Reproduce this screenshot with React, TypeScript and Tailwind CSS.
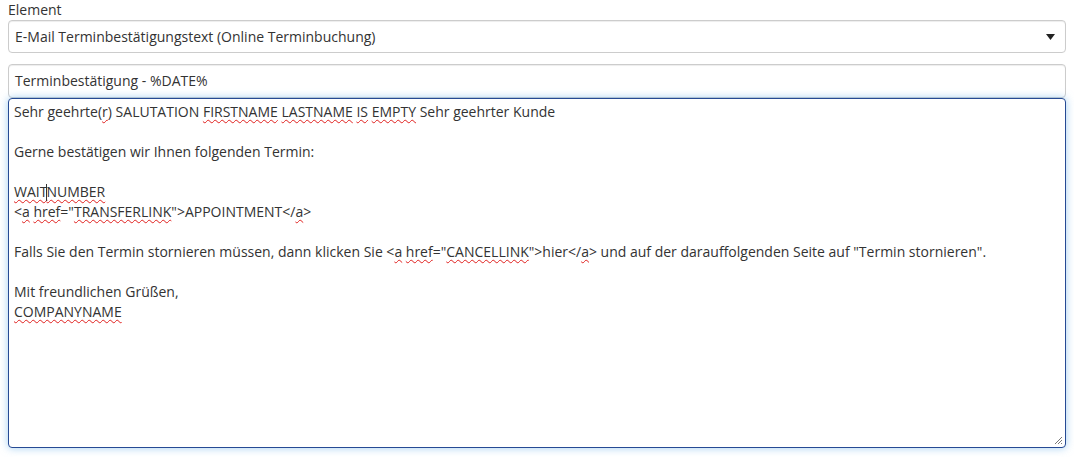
const sans = { fontFamily: '"Open Sans", "Noto Sans", sans-serif' }

// spell-checker style squiggle under unknown words
function Typo({ children }: { children: React.ReactNode }) {
  return (
    <span className="underline decoration-wavy decoration-[#e0201e] decoration-1 underline-offset-[2px]">
      {children}
    </span>
  )
}

function Caret() {
  return <span className="inline-block w-px h-[17px] bg-[#333] align-[-4px] -mx-px"></span>
}

function ResizeGrip() {
  return (
    <svg width="10" height="10" viewBox="0 0 10 10" className="absolute right-[2px] bottom-[2px]">
      <path d="M9 2 L2 9 M9 5 L5 9 M9 8 L8 9" stroke="#777" strokeWidth="1" />
    </svg>
  )
}

export default function App() {
  return (
    <div className="w-full h-[457px] bg-white px-2 text-[14px] leading-5 text-[#333]" style={sans}>
      <label className="block h-5">Element</label>

      <div className="flex items-center justify-between h-[33px] rounded border border-[#ccc] bg-white pl-[6px] pr-[10px] shadow-[inset_0_1px_1px_rgba(0,0,0,0.075)]">
        <span>E-Mail Terminbestätigungstext (Online Terminbuchung)</span>
        <svg width="9" height="6" viewBox="0 0 9 6">
          <path d="M0 0 H9 L4.5 6 Z" fill="#222" />
        </svg>
      </div>

      <div className="mt-[11px] flex items-center h-[34px] rounded border border-[#ccc] bg-white pl-[6px] shadow-[inset_0_1px_1px_rgba(0,0,0,0.075)]">
        Terminbestätigung - %DATE%
      </div>

      <div className="relative h-[350px] rounded border border-[#264a94] bg-white pl-[5px] pt-[3px] shadow-[0_0_8px_rgba(102,175,233,0.6)]">
        <div>
          Sehr geehrte(<Typo>r</Typo>) SALUTATION <Typo>FIRSTNAME</Typo> <Typo>LASTNAME</Typo> <Typo>IS</Typo>{' '}
          <Typo>EMPTY</Typo> Sehr geehrter Kunde
        </div>
        <div>&nbsp;</div>
        <div>Gerne bestätigen wir Ihnen folgenden Termin:</div>
        <div>&nbsp;</div>
        <div>
          <Typo>
            WAIT<Caret />NUMBER
          </Typo>
        </div>
        <div>
          &lt;<Typo>a</Typo> <Typo>href</Typo>="<Typo>TRANSFERLINK</Typo>"&gt;APPOINTMENT&lt;/<Typo>a</Typo>&gt;
        </div>
        <div>&nbsp;</div>
        <div>
          Falls Sie den Termin stornieren müssen, dann klicken Sie &lt;<Typo>a</Typo> <Typo>href</Typo>="
          <Typo>CANCELLINK</Typo>"&gt;hier&lt;/<Typo>a</Typo>&gt; und auf der darauffolgenden Seite auf "Termin
          stornieren".
        </div>
        <div>&nbsp;</div>
        <div>Mit freundlichen Grüßen,</div>
        <div>
          <Typo>COMPANYNAME</Typo>
        </div>
        <ResizeGrip />
      </div>
    </div>
  )
}
